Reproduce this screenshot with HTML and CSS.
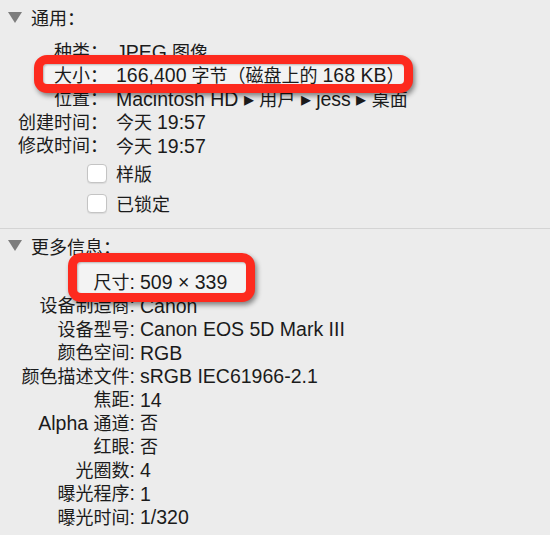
FILE: index.html
```html
<!DOCTYPE html>
<html lang="zh-CN">
<head>
<meta charset="utf-8">
<title>简介</title>
<link rel="stylesheet" href="styles.css">
</head>
<body>
<div class="panel">
  <section class="sec sec-general">
    <div class="hdr"><span class="tri"></span><span class="hdr-text">通用：</span></div>
    <div class="rows">
      <div class="row"><span class="k">种类：</span><span class="v"><span class="en">JPEG</span> 图像</span></div>
      <div class="row hl"><span class="mark mark-size"></span><span class="k">大小：</span><span class="v"><span class="en">166,400</span> 字节（磁盘上的 <span class="en">168 KB</span>）</span></div>
      <div class="row"><span class="k">位置：</span><span class="v"><span class="en">Macintosh HD ▸ </span>用户<span class="en"> ▸ jess ▸ </span>桌面</span></div>
      <div class="row"><span class="k">创建时间：</span><span class="v">今天 <span class="en">19:57</span></span></div>
      <div class="row"><span class="k">修改时间：</span><span class="v">今天 <span class="en">19:57</span></span></div>
    </div>
    <div class="checks">
      <label class="check"><span class="box"></span><span class="ctext">样版</span></label>
      <label class="check"><span class="box"></span><span class="ctext">已锁定</span></label>
    </div>
  </section>
  <section class="sec sec-more">
    <div class="hdr"><span class="tri"></span><span class="hdr-text">更多信息：</span></div>
    <div class="rows rows-more">
      <div class="row hl"><span class="mark mark-dim"></span><span class="k">尺寸<span class="en">:</span></span><span class="v en">509 × 339</span></div>
      <div class="row"><span class="k">设备制造商<span class="en">:</span></span><span class="v en">Canon</span></div>
      <div class="row"><span class="k">设备型号<span class="en">:</span></span><span class="v en">Canon EOS 5D Mark III</span></div>
      <div class="row"><span class="k">颜色空间<span class="en">:</span></span><span class="v en">RGB</span></div>
      <div class="row"><span class="k">颜色描述文件<span class="en">:</span></span><span class="v en">sRGB IEC61966-2.1</span></div>
      <div class="row"><span class="k">焦距<span class="en">:</span></span><span class="v en">14</span></div>
      <div class="row"><span class="k"><span class="en">Alpha </span>通道<span class="en">:</span></span><span class="v">否</span></div>
      <div class="row"><span class="k">红眼<span class="en">:</span></span><span class="v">否</span></div>
      <div class="row"><span class="k">光圈数<span class="en">:</span></span><span class="v en">4</span></div>
      <div class="row"><span class="k">曝光程序<span class="en">:</span></span><span class="v en">1</span></div>
      <div class="row"><span class="k">曝光时间<span class="en">:</span></span><span class="v en">1/320</span></div>
    </div>
  </section>
</div>
</body>
</html>
```
FILE: styles.css
```css
html, body {
  margin: 0;
  padding: 0;
  background: #ececec;
}
body {
  font-family: "Liberation Sans", "Noto Sans CJK SC", sans-serif;
  font-size: 18px;
  color: #1b1b1b;
  width: 550px;
  height: 535px;
  overflow: hidden;
}
.en {
  font-size: 19.5px;
}
.panel {
  display: flex;
  flex-direction: column;
}
.sec-general {
  padding-top: 3px;
  height: 225px;
  border-bottom: 1px solid #d4d4d4;
}
.hdr {
  display: flex;
  align-items: center;
  height: 28px;
  padding-left: 8px;
  gap: 9px;
}
.sec-more .hdr {
  height: 33px;
}
.tri {
  width: 0;
  height: 0;
  border-left: 7px solid transparent;
  border-right: 7px solid transparent;
  border-top: 11px solid #7d7d7d;
}
.rows {
  margin-top: 9.5px;
  display: flex;
  flex-direction: column;
}
.rows-more {
  margin-top: 8.5px;
}
.row {
  display: grid;
  grid-template-columns: 108px 1fr;
  column-gap: 8px;
  align-items: center;
  height: 23.5px;
  line-height: 20px;
  white-space: nowrap;
}
.rows-more .row {
  grid-template-columns: 135px 1fr;
  column-gap: 5px;
}
.k {
  text-align: right;
}
.hl {
  position: relative;
}
.hl .k, .hl .v {
  position: relative;
  z-index: 1;
}
.mark {
  position: absolute;
  z-index: 0;
  box-sizing: border-box;
  border: 9px solid #fd2a1e;
  border-radius: 13px;
  background: #f3f3f3;
  box-shadow: 2px 3px 5px rgba(0, 0, 0, 0.45), inset 1px 1px 2px rgba(0, 0, 0, 0.25);
}
.mark-size {
  left: 34px;
  top: -9px;
  width: 379px;
  height: 38px;
}
.mark-dim {
  left: 68px;
  top: -18px;
  width: 187px;
  height: 49px;
}
.checks {
  display: flex;
  flex-direction: column;
}
.check {
  display: flex;
  align-items: center;
  height: 30px;
  padding-left: 87px;
  gap: 9px;
}
.box {
  box-sizing: border-box;
  width: 20px;
  height: 19px;
  border: 1px solid #c4c4c4;
  border-radius: 4px;
  background: #ffffff;
  box-shadow: 0 1px 1px rgba(0, 0, 0, 0.08);
}
```
